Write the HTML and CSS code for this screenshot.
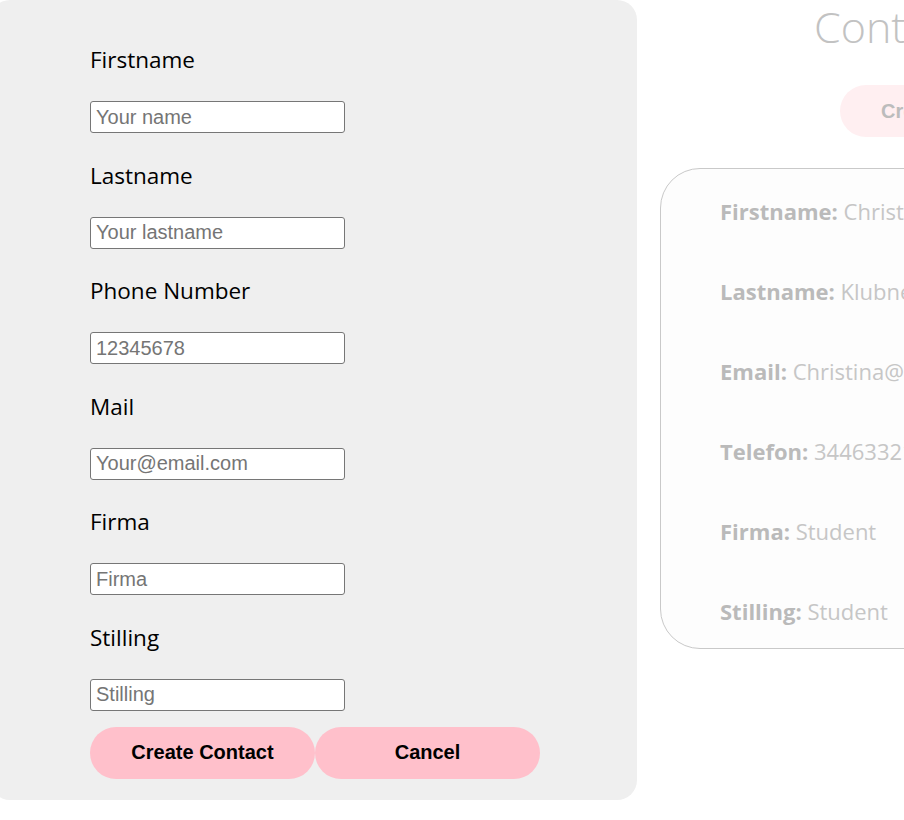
FILE: index.html
```html
<!DOCTYPE html>
<html lang="en">
<head>
<meta charset="utf-8">
<title>Contacts</title>
<link rel="stylesheet" href="styles.css">
</head>
<body>
<main class="page">
  <h1 class="title">Contacts</h1>
  <button class="open-btn" type="button">Create Contact</button>
  <section class="card">
    <p class="row"><b>Firstname:</b> Christina</p>
    <p class="row"><b>Lastname:</b> Klubnes</p>
    <p class="row"><b>Email:</b> Christina@email.com</p>
    <p class="row"><b>Telefon:</b> 34463321</p>
    <p class="row"><b>Firma:</b> Student</p>
    <p class="row"><b>Stilling:</b> Student</p>
  </section>
</main>

<form class="modal">
  <div class="field">
    <label class="label" for="fn">Firstname</label>
    <input class="input" id="fn" type="text" placeholder="Your name">
  </div>
  <div class="field">
    <label class="label" for="ln">Lastname</label>
    <input class="input" id="ln" type="text" placeholder="Your lastname">
  </div>
  <div class="field">
    <label class="label" for="ph">Phone Number</label>
    <input class="input" id="ph" type="text" placeholder="12345678">
  </div>
  <div class="field">
    <label class="label" for="ml">Mail</label>
    <input class="input" id="ml" type="text" placeholder="Your@email.com">
  </div>
  <div class="field">
    <label class="label" for="fi">Firma</label>
    <input class="input" id="fi" type="text" placeholder="Firma">
  </div>
  <div class="field last">
    <label class="label" for="st">Stilling</label>
    <input class="input" id="st" type="text" placeholder="Stilling">
  </div>
  <div class="actions">
    <button class="btn" type="button">Create Contact</button>
    <button class="btn" type="button">Cancel</button>
  </div>
</form>
</body>
</html>
```
FILE: styles.css
```css
html, body {
  margin: 0;
  padding: 0;
  background: #ffffff;
  overflow: hidden;
  height: 100%;
}

body {
  position: relative;
  font-family: "Open Sans", "Noto Sans", sans-serif;
}

/* background page */
.page {
  display: flex;
  flex-direction: column;
  align-items: flex-start;
  padding-left: 660px;
  width: 700px;
}

.title {
  margin: 0 0 0 154px;
  font-size: 43px;
  font-weight: 300;
  line-height: 54px;
  color: #c2c2c2;
  white-space: nowrap;
}

.open-btn {
  margin: 31px 0 0 180px;
  height: 52px;
  width: 225px;
  border: none;
  border-radius: 26px;
  background: #ffeff1;
  color: #bcbcbc;
  font-family: "Liberation Sans", Arial, sans-serif;
  font-weight: bold;
  font-size: 20px;
  text-align: left;
  padding-left: 41px;
  white-space: nowrap;
}

.card {
  margin-top: 31px;
  width: 520px;
  box-sizing: border-box;
  border: 1px solid #c9c9c9;
  border-radius: 40px;
  background: #fdfdfd;
  padding: 27px 0 22px 59px;
  display: flex;
  flex-direction: column;
  gap: 50px;
}

.row {
  margin: 0;
  font-size: 22px;
  line-height: 30px;
  color: #c6c6c6;
  white-space: nowrap;
}

.row b {
  color: #bababa;
  font-weight: 700;
}

/* modal form */
.modal {
  position: absolute;
  left: -10px;
  top: 0;
  width: 647px;
  height: 800px;
  box-sizing: border-box;
  margin: 0;
  padding: 45px 0 0 100px;
  background: #efefef;
  border-radius: 20px;
  display: flex;
  flex-direction: column;
  gap: 27.6px;
}

.field {
  display: flex;
  flex-direction: column;
  align-items: flex-start;
}

.label {
  font-size: 22.5px;
  line-height: 30px;
  color: #000000;
  margin-bottom: 26px;
}

.input {
  box-sizing: border-box;
  width: 255px;
  height: 32px;
  margin: 0;
  padding: 1px 5px;
  border: 1px solid #767676;
  border-radius: 3px;
  background: #ffffff;
  font-family: "Liberation Sans", Arial, sans-serif;
  font-size: 20px;
  color: #000;
}

.input::placeholder {
  color: #757575;
}

.field.last {
  margin-bottom: -11.6px;
}

.actions {
  display: flex;
}

.btn {
  width: 225px;
  height: 52px;
  border: none;
  border-radius: 26px;
  background: #ffc0cb;
  color: #000;
  font-family: "Liberation Sans", Arial, sans-serif;
  font-weight: bold;
  font-size: 20px;
  padding: 0;
}
```
